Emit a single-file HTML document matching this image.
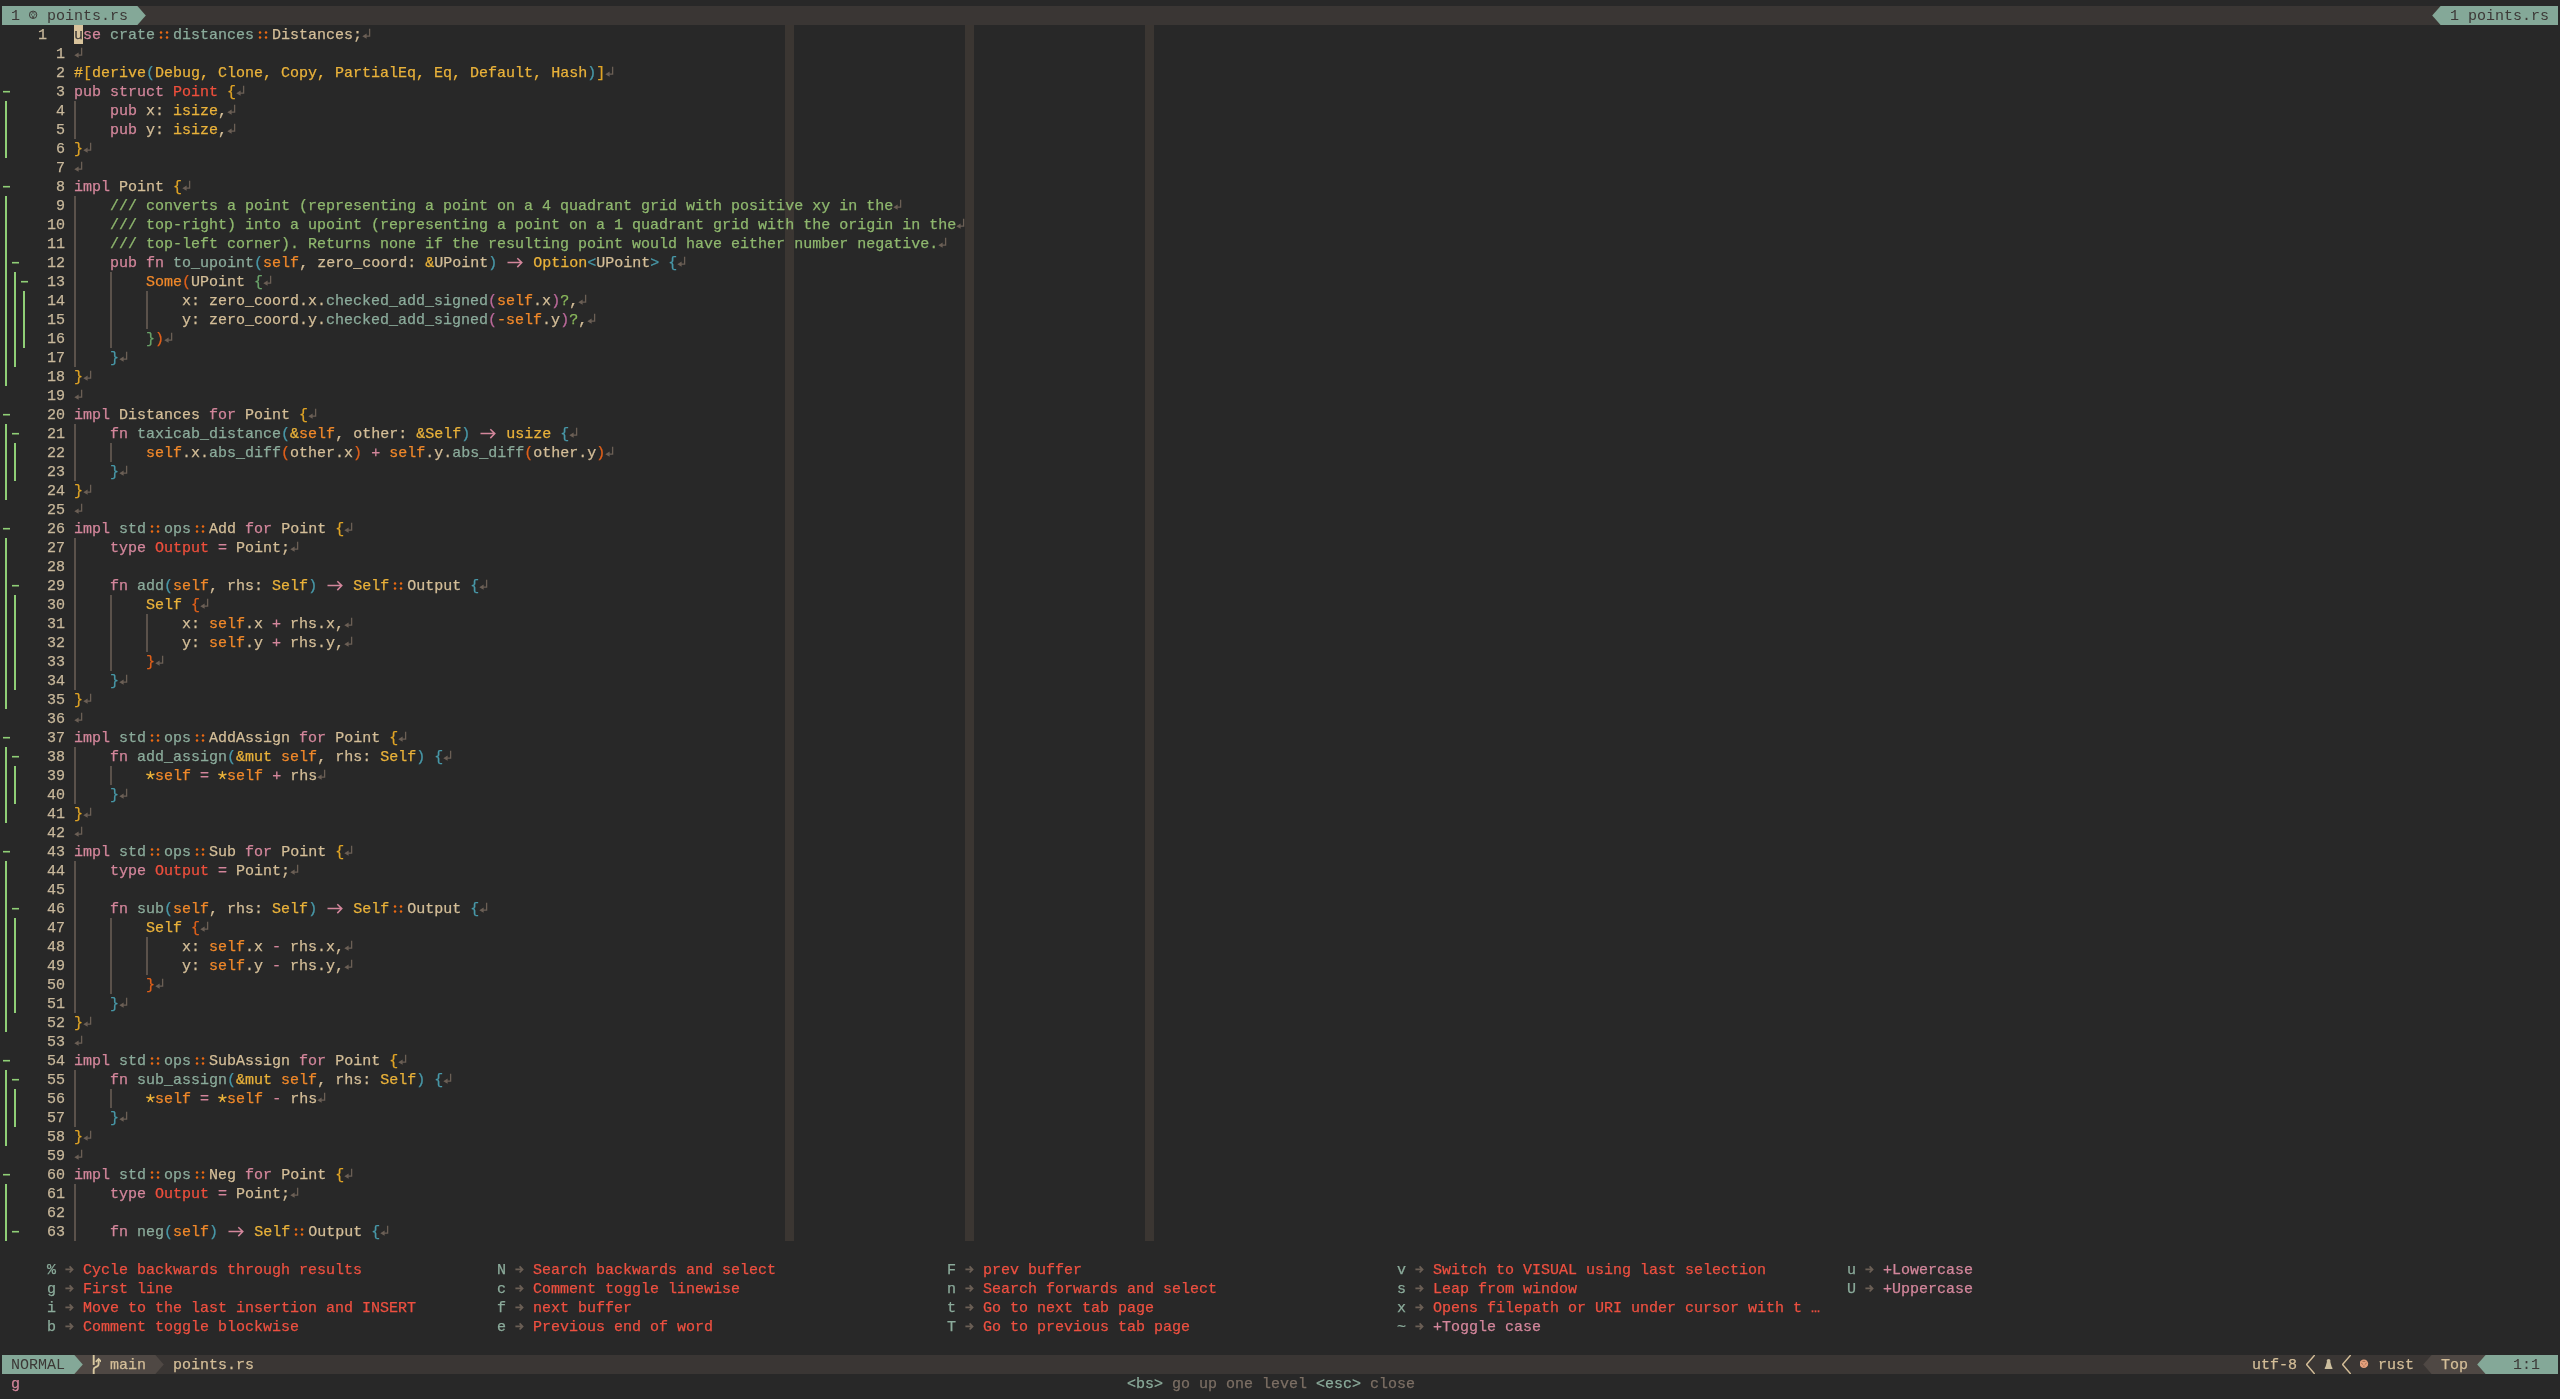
<!DOCTYPE html><html><head><meta charset="utf-8"><style>

html,body{margin:0;padding:0;background:#282828;width:2560px;height:1399px;overflow:hidden}
body{position:relative;font-family:"Liberation Mono",monospace;font-size:15px;color:#d4be98;-webkit-text-stroke-width:0.25px}
#w{position:absolute;left:0;top:0;width:2560px;height:1399px;will-change:transform}
.t{position:absolute;height:19px;line-height:19px;white-space:pre;padding-top:1px;box-sizing:border-box}
.bg{color:#282828}
.fg{color:#d4be98}
.k{color:#d3869b}
.n{color:#8bab9b}
.o{color:#f0882a}
.y{color:#eab23a}
.r{color:#ef4f3c}
.c{color:#8fb86e}
.q{color:#8ab85c}
.d{color:#ec6a12}
.p1{color:#e0a425}
.p2{color:#4898a8}
.p3{color:#e0601a}
.p4{color:#6aa46a}
.p5{color:#bb699a}
.nl{color:#6b5f55}
.lnr{color:#c8b89b}
.cc{color:#3b3632}

</style></head><body><div id="w">
<div style="position:absolute;left:785px;top:25px;width:9px;height:1216px;background:#3b3632;"></div>
<div style="position:absolute;left:965px;top:25px;width:9px;height:1216px;background:#3b3632;"></div>
<div style="position:absolute;left:1145px;top:25px;width:9px;height:1216px;background:#3b3632;"></div>
<div style="position:absolute;left:2px;top:6px;width:2556px;height:19px;background:#3a3634;"></div>
<div class="t" style="left:38px;top:25px;"><span class="lnr">1</span></div>
<div class="t" style="left:74px;top:25px;"><span class="k">use</span> <span class="n">crate</span><span class="d">  </span><span class="n">distances</span><span class="d">  </span>Distances;</div>
<svg style="position:absolute;left:362px;top:25px" width="9" height="19"><path d="M7.6 3.7V11.2H2.5" fill="none" stroke="#6b5f55" stroke-width="1.3"/><path d="M0.3 11.2L4.6 8.6V13.8Z" fill="#6b5f55"/></svg>
<div class="t" style="left:56px;top:44px;"><span class="lnr">1</span></div>
<svg style="position:absolute;left:74px;top:44px" width="9" height="19"><path d="M7.6 3.7V11.2H2.5" fill="none" stroke="#6b5f55" stroke-width="1.3"/><path d="M0.3 11.2L4.6 8.6V13.8Z" fill="#6b5f55"/></svg>
<div class="t" style="left:56px;top:63px;"><span class="lnr">2</span></div>
<div class="t" style="left:74px;top:63px;"><span class="y">#</span><span class="p1">[</span><span class="y">derive</span><span class="p2">(</span><span class="y">Debug, Clone, Copy, PartialEq, Eq, Default, Hash</span><span class="p2">)</span><span class="p1">]</span></div>
<svg style="position:absolute;left:605px;top:63px" width="9" height="19"><path d="M7.6 3.7V11.2H2.5" fill="none" stroke="#6b5f55" stroke-width="1.3"/><path d="M0.3 11.2L4.6 8.6V13.8Z" fill="#6b5f55"/></svg>
<svg style="position:absolute;left:2px;top:82px" width="9" height="19"><rect x="1" y="8.9" width="7" height="1.6" fill="#8fcf76"/></svg>
<div class="t" style="left:56px;top:82px;"><span class="lnr">3</span></div>
<div class="t" style="left:74px;top:82px;"><span class="k">pub</span> <span class="k">struct</span> <span class="r">Point</span> <span class="p1">{</span></div>
<svg style="position:absolute;left:236px;top:82px" width="9" height="19"><path d="M7.6 3.7V11.2H2.5" fill="none" stroke="#6b5f55" stroke-width="1.3"/><path d="M0.3 11.2L4.6 8.6V13.8Z" fill="#6b5f55"/></svg>
<div style="position:absolute;left:5px;top:101px;width:2px;height:19px;background:#8fcf76;"></div>
<div class="t" style="left:56px;top:101px;"><span class="lnr">4</span></div>
<div style="position:absolute;left:74px;top:101px;width:2px;height:19px;background:#5b524b;"></div>
<div class="t" style="left:74px;top:101px;">    <span class="k">pub</span> x: <span class="y">isize</span>,</div>
<svg style="position:absolute;left:227px;top:101px" width="9" height="19"><path d="M7.6 3.7V11.2H2.5" fill="none" stroke="#6b5f55" stroke-width="1.3"/><path d="M0.3 11.2L4.6 8.6V13.8Z" fill="#6b5f55"/></svg>
<div style="position:absolute;left:5px;top:120px;width:2px;height:19px;background:#8fcf76;"></div>
<div class="t" style="left:56px;top:120px;"><span class="lnr">5</span></div>
<div style="position:absolute;left:74px;top:120px;width:2px;height:19px;background:#5b524b;"></div>
<div class="t" style="left:74px;top:120px;">    <span class="k">pub</span> y: <span class="y">isize</span>,</div>
<svg style="position:absolute;left:227px;top:120px" width="9" height="19"><path d="M7.6 3.7V11.2H2.5" fill="none" stroke="#6b5f55" stroke-width="1.3"/><path d="M0.3 11.2L4.6 8.6V13.8Z" fill="#6b5f55"/></svg>
<div style="position:absolute;left:5px;top:139px;width:2px;height:19px;background:#8fcf76;"></div>
<div class="t" style="left:56px;top:139px;"><span class="lnr">6</span></div>
<div class="t" style="left:74px;top:139px;"><span class="p1">}</span></div>
<svg style="position:absolute;left:83px;top:139px" width="9" height="19"><path d="M7.6 3.7V11.2H2.5" fill="none" stroke="#6b5f55" stroke-width="1.3"/><path d="M0.3 11.2L4.6 8.6V13.8Z" fill="#6b5f55"/></svg>
<div class="t" style="left:56px;top:158px;"><span class="lnr">7</span></div>
<svg style="position:absolute;left:74px;top:158px" width="9" height="19"><path d="M7.6 3.7V11.2H2.5" fill="none" stroke="#6b5f55" stroke-width="1.3"/><path d="M0.3 11.2L4.6 8.6V13.8Z" fill="#6b5f55"/></svg>
<svg style="position:absolute;left:2px;top:177px" width="9" height="19"><rect x="1" y="8.9" width="7" height="1.6" fill="#8fcf76"/></svg>
<div class="t" style="left:56px;top:177px;"><span class="lnr">8</span></div>
<div class="t" style="left:74px;top:177px;"><span class="k">impl</span> Point <span class="p1">{</span></div>
<svg style="position:absolute;left:182px;top:177px" width="9" height="19"><path d="M7.6 3.7V11.2H2.5" fill="none" stroke="#6b5f55" stroke-width="1.3"/><path d="M0.3 11.2L4.6 8.6V13.8Z" fill="#6b5f55"/></svg>
<div style="position:absolute;left:5px;top:196px;width:2px;height:19px;background:#8fcf76;"></div>
<div class="t" style="left:56px;top:196px;"><span class="lnr">9</span></div>
<div style="position:absolute;left:74px;top:196px;width:2px;height:19px;background:#5b524b;"></div>
<div class="t" style="left:74px;top:196px;">    <span class="c">/// converts a point (representing a point on a 4 quadrant grid with positive xy in the</span></div>
<svg style="position:absolute;left:893px;top:196px" width="9" height="19"><path d="M7.6 3.7V11.2H2.5" fill="none" stroke="#6b5f55" stroke-width="1.3"/><path d="M0.3 11.2L4.6 8.6V13.8Z" fill="#6b5f55"/></svg>
<div style="position:absolute;left:5px;top:215px;width:2px;height:19px;background:#8fcf76;"></div>
<div class="t" style="left:47px;top:215px;"><span class="lnr">10</span></div>
<div style="position:absolute;left:74px;top:215px;width:2px;height:19px;background:#5b524b;"></div>
<div class="t" style="left:74px;top:215px;">    <span class="c">/// top-right) into a upoint (representing a point on a 1 quadrant grid with the origin in the</span></div>
<svg style="position:absolute;left:956px;top:215px" width="9" height="19"><path d="M7.6 3.7V11.2H2.5" fill="none" stroke="#6b5f55" stroke-width="1.3"/><path d="M0.3 11.2L4.6 8.6V13.8Z" fill="#6b5f55"/></svg>
<div style="position:absolute;left:5px;top:234px;width:2px;height:19px;background:#8fcf76;"></div>
<div class="t" style="left:47px;top:234px;"><span class="lnr">11</span></div>
<div style="position:absolute;left:74px;top:234px;width:2px;height:19px;background:#5b524b;"></div>
<div class="t" style="left:74px;top:234px;">    <span class="c">/// top-left corner). Returns none if the resulting point would have either number negative.</span></div>
<svg style="position:absolute;left:938px;top:234px" width="9" height="19"><path d="M7.6 3.7V11.2H2.5" fill="none" stroke="#6b5f55" stroke-width="1.3"/><path d="M0.3 11.2L4.6 8.6V13.8Z" fill="#6b5f55"/></svg>
<div style="position:absolute;left:5px;top:253px;width:2px;height:19px;background:#8fcf76;"></div>
<svg style="position:absolute;left:11px;top:253px" width="9" height="19"><rect x="1" y="8.9" width="7" height="1.6" fill="#8fcf76"/></svg>
<div class="t" style="left:47px;top:253px;"><span class="lnr">12</span></div>
<div style="position:absolute;left:74px;top:253px;width:2px;height:19px;background:#5b524b;"></div>
<div class="t" style="left:74px;top:253px;">    <span class="k">pub</span> <span class="k">fn</span> <span class="n">to_upoint</span><span class="p2">(</span><span class="o">self</span>, zero_coord: <span class="y">&amp;</span>UPoint<span class="p2">)</span> <span class="k">  </span> <span class="y">Option</span><span class="p2">&lt;</span>UPoint<span class="p2">&gt;</span> <span class="p2">{</span></div>
<svg style="position:absolute;left:677px;top:253px" width="9" height="19"><path d="M7.6 3.7V11.2H2.5" fill="none" stroke="#6b5f55" stroke-width="1.3"/><path d="M0.3 11.2L4.6 8.6V13.8Z" fill="#6b5f55"/></svg>
<div style="position:absolute;left:5px;top:272px;width:2px;height:19px;background:#8fcf76;"></div>
<div style="position:absolute;left:14px;top:272px;width:2px;height:19px;background:#8fcf76;"></div>
<svg style="position:absolute;left:20px;top:272px" width="9" height="19"><rect x="1" y="8.9" width="7" height="1.6" fill="#8fcf76"/></svg>
<div class="t" style="left:47px;top:272px;"><span class="lnr">13</span></div>
<div style="position:absolute;left:74px;top:272px;width:2px;height:19px;background:#5b524b;"></div>
<div style="position:absolute;left:110px;top:272px;width:2px;height:19px;background:#5b524b;"></div>
<div class="t" style="left:74px;top:272px;">        <span class="o">Some</span><span class="p3">(</span>UPoint <span class="p4">{</span></div>
<svg style="position:absolute;left:263px;top:272px" width="9" height="19"><path d="M7.6 3.7V11.2H2.5" fill="none" stroke="#6b5f55" stroke-width="1.3"/><path d="M0.3 11.2L4.6 8.6V13.8Z" fill="#6b5f55"/></svg>
<div style="position:absolute;left:5px;top:291px;width:2px;height:19px;background:#8fcf76;"></div>
<div style="position:absolute;left:14px;top:291px;width:2px;height:19px;background:#8fcf76;"></div>
<div style="position:absolute;left:23px;top:291px;width:2px;height:19px;background:#8fcf76;"></div>
<div class="t" style="left:47px;top:291px;"><span class="lnr">14</span></div>
<div style="position:absolute;left:74px;top:291px;width:2px;height:19px;background:#5b524b;"></div>
<div style="position:absolute;left:110px;top:291px;width:2px;height:19px;background:#5b524b;"></div>
<div style="position:absolute;left:146px;top:291px;width:2px;height:19px;background:#5b524b;"></div>
<div class="t" style="left:74px;top:291px;">            x: zero_coord.x.<span class="n">checked_add_signed</span><span class="p5">(</span><span class="o">self</span>.x<span class="p5">)</span><span class="q">?</span>,</div>
<svg style="position:absolute;left:578px;top:291px" width="9" height="19"><path d="M7.6 3.7V11.2H2.5" fill="none" stroke="#6b5f55" stroke-width="1.3"/><path d="M0.3 11.2L4.6 8.6V13.8Z" fill="#6b5f55"/></svg>
<div style="position:absolute;left:5px;top:310px;width:2px;height:19px;background:#8fcf76;"></div>
<div style="position:absolute;left:14px;top:310px;width:2px;height:19px;background:#8fcf76;"></div>
<div style="position:absolute;left:23px;top:310px;width:2px;height:19px;background:#8fcf76;"></div>
<div class="t" style="left:47px;top:310px;"><span class="lnr">15</span></div>
<div style="position:absolute;left:74px;top:310px;width:2px;height:19px;background:#5b524b;"></div>
<div style="position:absolute;left:110px;top:310px;width:2px;height:19px;background:#5b524b;"></div>
<div style="position:absolute;left:146px;top:310px;width:2px;height:19px;background:#5b524b;"></div>
<div class="t" style="left:74px;top:310px;">            y: zero_coord.y.<span class="n">checked_add_signed</span><span class="p5">(</span><span class="o">-self</span>.y<span class="p5">)</span><span class="q">?</span>,</div>
<svg style="position:absolute;left:587px;top:310px" width="9" height="19"><path d="M7.6 3.7V11.2H2.5" fill="none" stroke="#6b5f55" stroke-width="1.3"/><path d="M0.3 11.2L4.6 8.6V13.8Z" fill="#6b5f55"/></svg>
<div style="position:absolute;left:5px;top:329px;width:2px;height:19px;background:#8fcf76;"></div>
<div style="position:absolute;left:14px;top:329px;width:2px;height:19px;background:#8fcf76;"></div>
<div style="position:absolute;left:23px;top:329px;width:2px;height:19px;background:#8fcf76;"></div>
<div class="t" style="left:47px;top:329px;"><span class="lnr">16</span></div>
<div style="position:absolute;left:74px;top:329px;width:2px;height:19px;background:#5b524b;"></div>
<div style="position:absolute;left:110px;top:329px;width:2px;height:19px;background:#5b524b;"></div>
<div class="t" style="left:74px;top:329px;">        <span class="p4">}</span><span class="p3">)</span></div>
<svg style="position:absolute;left:164px;top:329px" width="9" height="19"><path d="M7.6 3.7V11.2H2.5" fill="none" stroke="#6b5f55" stroke-width="1.3"/><path d="M0.3 11.2L4.6 8.6V13.8Z" fill="#6b5f55"/></svg>
<div style="position:absolute;left:5px;top:348px;width:2px;height:19px;background:#8fcf76;"></div>
<div style="position:absolute;left:14px;top:348px;width:2px;height:19px;background:#8fcf76;"></div>
<div class="t" style="left:47px;top:348px;"><span class="lnr">17</span></div>
<div style="position:absolute;left:74px;top:348px;width:2px;height:19px;background:#5b524b;"></div>
<div class="t" style="left:74px;top:348px;">    <span class="p2">}</span></div>
<svg style="position:absolute;left:119px;top:348px" width="9" height="19"><path d="M7.6 3.7V11.2H2.5" fill="none" stroke="#6b5f55" stroke-width="1.3"/><path d="M0.3 11.2L4.6 8.6V13.8Z" fill="#6b5f55"/></svg>
<div style="position:absolute;left:5px;top:367px;width:2px;height:19px;background:#8fcf76;"></div>
<div class="t" style="left:47px;top:367px;"><span class="lnr">18</span></div>
<div class="t" style="left:74px;top:367px;"><span class="p1">}</span></div>
<svg style="position:absolute;left:83px;top:367px" width="9" height="19"><path d="M7.6 3.7V11.2H2.5" fill="none" stroke="#6b5f55" stroke-width="1.3"/><path d="M0.3 11.2L4.6 8.6V13.8Z" fill="#6b5f55"/></svg>
<div class="t" style="left:47px;top:386px;"><span class="lnr">19</span></div>
<svg style="position:absolute;left:74px;top:386px" width="9" height="19"><path d="M7.6 3.7V11.2H2.5" fill="none" stroke="#6b5f55" stroke-width="1.3"/><path d="M0.3 11.2L4.6 8.6V13.8Z" fill="#6b5f55"/></svg>
<svg style="position:absolute;left:2px;top:405px" width="9" height="19"><rect x="1" y="8.9" width="7" height="1.6" fill="#8fcf76"/></svg>
<div class="t" style="left:47px;top:405px;"><span class="lnr">20</span></div>
<div class="t" style="left:74px;top:405px;"><span class="k">impl</span> Distances <span class="k">for</span> Point <span class="p1">{</span></div>
<svg style="position:absolute;left:308px;top:405px" width="9" height="19"><path d="M7.6 3.7V11.2H2.5" fill="none" stroke="#6b5f55" stroke-width="1.3"/><path d="M0.3 11.2L4.6 8.6V13.8Z" fill="#6b5f55"/></svg>
<div style="position:absolute;left:5px;top:424px;width:2px;height:19px;background:#8fcf76;"></div>
<svg style="position:absolute;left:11px;top:424px" width="9" height="19"><rect x="1" y="8.9" width="7" height="1.6" fill="#8fcf76"/></svg>
<div class="t" style="left:47px;top:424px;"><span class="lnr">21</span></div>
<div style="position:absolute;left:74px;top:424px;width:2px;height:19px;background:#5b524b;"></div>
<div class="t" style="left:74px;top:424px;">    <span class="k">fn</span> <span class="n">taxicab_distance</span><span class="p2">(</span><span class="y">&amp;</span><span class="o">self</span>, other: <span class="y">&amp;Self</span><span class="p2">)</span> <span class="k">  </span> <span class="y">usize</span> <span class="p2">{</span></div>
<svg style="position:absolute;left:569px;top:424px" width="9" height="19"><path d="M7.6 3.7V11.2H2.5" fill="none" stroke="#6b5f55" stroke-width="1.3"/><path d="M0.3 11.2L4.6 8.6V13.8Z" fill="#6b5f55"/></svg>
<div style="position:absolute;left:5px;top:443px;width:2px;height:19px;background:#8fcf76;"></div>
<div style="position:absolute;left:14px;top:443px;width:2px;height:19px;background:#8fcf76;"></div>
<div class="t" style="left:47px;top:443px;"><span class="lnr">22</span></div>
<div style="position:absolute;left:74px;top:443px;width:2px;height:19px;background:#5b524b;"></div>
<div style="position:absolute;left:110px;top:443px;width:2px;height:19px;background:#5b524b;"></div>
<div class="t" style="left:74px;top:443px;">        <span class="o">self</span>.x.<span class="n">abs_diff</span><span class="p3">(</span>other.x<span class="p3">)</span> <span class="k">+</span> <span class="o">self</span>.y.<span class="n">abs_diff</span><span class="p3">(</span>other.y<span class="p3">)</span></div>
<svg style="position:absolute;left:605px;top:443px" width="9" height="19"><path d="M7.6 3.7V11.2H2.5" fill="none" stroke="#6b5f55" stroke-width="1.3"/><path d="M0.3 11.2L4.6 8.6V13.8Z" fill="#6b5f55"/></svg>
<div style="position:absolute;left:5px;top:462px;width:2px;height:19px;background:#8fcf76;"></div>
<div style="position:absolute;left:14px;top:462px;width:2px;height:19px;background:#8fcf76;"></div>
<div class="t" style="left:47px;top:462px;"><span class="lnr">23</span></div>
<div style="position:absolute;left:74px;top:462px;width:2px;height:19px;background:#5b524b;"></div>
<div class="t" style="left:74px;top:462px;">    <span class="p2">}</span></div>
<svg style="position:absolute;left:119px;top:462px" width="9" height="19"><path d="M7.6 3.7V11.2H2.5" fill="none" stroke="#6b5f55" stroke-width="1.3"/><path d="M0.3 11.2L4.6 8.6V13.8Z" fill="#6b5f55"/></svg>
<div style="position:absolute;left:5px;top:481px;width:2px;height:19px;background:#8fcf76;"></div>
<div class="t" style="left:47px;top:481px;"><span class="lnr">24</span></div>
<div class="t" style="left:74px;top:481px;"><span class="p1">}</span></div>
<svg style="position:absolute;left:83px;top:481px" width="9" height="19"><path d="M7.6 3.7V11.2H2.5" fill="none" stroke="#6b5f55" stroke-width="1.3"/><path d="M0.3 11.2L4.6 8.6V13.8Z" fill="#6b5f55"/></svg>
<div class="t" style="left:47px;top:500px;"><span class="lnr">25</span></div>
<svg style="position:absolute;left:74px;top:500px" width="9" height="19"><path d="M7.6 3.7V11.2H2.5" fill="none" stroke="#6b5f55" stroke-width="1.3"/><path d="M0.3 11.2L4.6 8.6V13.8Z" fill="#6b5f55"/></svg>
<svg style="position:absolute;left:2px;top:519px" width="9" height="19"><rect x="1" y="8.9" width="7" height="1.6" fill="#8fcf76"/></svg>
<div class="t" style="left:47px;top:519px;"><span class="lnr">26</span></div>
<div class="t" style="left:74px;top:519px;"><span class="k">impl</span> <span class="n">std</span><span class="d">  </span><span class="n">ops</span><span class="d">  </span>Add <span class="k">for</span> Point <span class="p1">{</span></div>
<svg style="position:absolute;left:344px;top:519px" width="9" height="19"><path d="M7.6 3.7V11.2H2.5" fill="none" stroke="#6b5f55" stroke-width="1.3"/><path d="M0.3 11.2L4.6 8.6V13.8Z" fill="#6b5f55"/></svg>
<div style="position:absolute;left:5px;top:538px;width:2px;height:19px;background:#8fcf76;"></div>
<div class="t" style="left:47px;top:538px;"><span class="lnr">27</span></div>
<div style="position:absolute;left:74px;top:538px;width:2px;height:19px;background:#5b524b;"></div>
<div class="t" style="left:74px;top:538px;">    <span class="k">type</span> <span class="r">Output</span> <span class="k">=</span> Point;</div>
<svg style="position:absolute;left:290px;top:538px" width="9" height="19"><path d="M7.6 3.7V11.2H2.5" fill="none" stroke="#6b5f55" stroke-width="1.3"/><path d="M0.3 11.2L4.6 8.6V13.8Z" fill="#6b5f55"/></svg>
<div style="position:absolute;left:5px;top:557px;width:2px;height:19px;background:#8fcf76;"></div>
<div class="t" style="left:47px;top:557px;"><span class="lnr">28</span></div>
<div style="position:absolute;left:74px;top:557px;width:2px;height:19px;background:#5b524b;"></div>
<div style="position:absolute;left:5px;top:576px;width:2px;height:19px;background:#8fcf76;"></div>
<svg style="position:absolute;left:11px;top:576px" width="9" height="19"><rect x="1" y="8.9" width="7" height="1.6" fill="#8fcf76"/></svg>
<div class="t" style="left:47px;top:576px;"><span class="lnr">29</span></div>
<div style="position:absolute;left:74px;top:576px;width:2px;height:19px;background:#5b524b;"></div>
<div class="t" style="left:74px;top:576px;">    <span class="k">fn</span> <span class="n">add</span><span class="p2">(</span><span class="o">self</span>, rhs: <span class="y">Self</span><span class="p2">)</span> <span class="k">  </span> <span class="y">Self</span><span class="d">  </span>Output <span class="p2">{</span></div>
<svg style="position:absolute;left:479px;top:576px" width="9" height="19"><path d="M7.6 3.7V11.2H2.5" fill="none" stroke="#6b5f55" stroke-width="1.3"/><path d="M0.3 11.2L4.6 8.6V13.8Z" fill="#6b5f55"/></svg>
<div style="position:absolute;left:5px;top:595px;width:2px;height:19px;background:#8fcf76;"></div>
<div style="position:absolute;left:14px;top:595px;width:2px;height:19px;background:#8fcf76;"></div>
<div class="t" style="left:47px;top:595px;"><span class="lnr">30</span></div>
<div style="position:absolute;left:74px;top:595px;width:2px;height:19px;background:#5b524b;"></div>
<div style="position:absolute;left:110px;top:595px;width:2px;height:19px;background:#5b524b;"></div>
<div class="t" style="left:74px;top:595px;">        <span class="y">Self</span> <span class="p3">{</span></div>
<svg style="position:absolute;left:200px;top:595px" width="9" height="19"><path d="M7.6 3.7V11.2H2.5" fill="none" stroke="#6b5f55" stroke-width="1.3"/><path d="M0.3 11.2L4.6 8.6V13.8Z" fill="#6b5f55"/></svg>
<div style="position:absolute;left:5px;top:614px;width:2px;height:19px;background:#8fcf76;"></div>
<div style="position:absolute;left:14px;top:614px;width:2px;height:19px;background:#8fcf76;"></div>
<div class="t" style="left:47px;top:614px;"><span class="lnr">31</span></div>
<div style="position:absolute;left:74px;top:614px;width:2px;height:19px;background:#5b524b;"></div>
<div style="position:absolute;left:110px;top:614px;width:2px;height:19px;background:#5b524b;"></div>
<div style="position:absolute;left:146px;top:614px;width:2px;height:19px;background:#5b524b;"></div>
<div class="t" style="left:74px;top:614px;">            x: <span class="o">self</span>.x <span class="k">+</span> rhs.x,</div>
<svg style="position:absolute;left:344px;top:614px" width="9" height="19"><path d="M7.6 3.7V11.2H2.5" fill="none" stroke="#6b5f55" stroke-width="1.3"/><path d="M0.3 11.2L4.6 8.6V13.8Z" fill="#6b5f55"/></svg>
<div style="position:absolute;left:5px;top:633px;width:2px;height:19px;background:#8fcf76;"></div>
<div style="position:absolute;left:14px;top:633px;width:2px;height:19px;background:#8fcf76;"></div>
<div class="t" style="left:47px;top:633px;"><span class="lnr">32</span></div>
<div style="position:absolute;left:74px;top:633px;width:2px;height:19px;background:#5b524b;"></div>
<div style="position:absolute;left:110px;top:633px;width:2px;height:19px;background:#5b524b;"></div>
<div style="position:absolute;left:146px;top:633px;width:2px;height:19px;background:#5b524b;"></div>
<div class="t" style="left:74px;top:633px;">            y: <span class="o">self</span>.y <span class="k">+</span> rhs.y,</div>
<svg style="position:absolute;left:344px;top:633px" width="9" height="19"><path d="M7.6 3.7V11.2H2.5" fill="none" stroke="#6b5f55" stroke-width="1.3"/><path d="M0.3 11.2L4.6 8.6V13.8Z" fill="#6b5f55"/></svg>
<div style="position:absolute;left:5px;top:652px;width:2px;height:19px;background:#8fcf76;"></div>
<div style="position:absolute;left:14px;top:652px;width:2px;height:19px;background:#8fcf76;"></div>
<div class="t" style="left:47px;top:652px;"><span class="lnr">33</span></div>
<div style="position:absolute;left:74px;top:652px;width:2px;height:19px;background:#5b524b;"></div>
<div style="position:absolute;left:110px;top:652px;width:2px;height:19px;background:#5b524b;"></div>
<div class="t" style="left:74px;top:652px;">        <span class="p3">}</span></div>
<svg style="position:absolute;left:155px;top:652px" width="9" height="19"><path d="M7.6 3.7V11.2H2.5" fill="none" stroke="#6b5f55" stroke-width="1.3"/><path d="M0.3 11.2L4.6 8.6V13.8Z" fill="#6b5f55"/></svg>
<div style="position:absolute;left:5px;top:671px;width:2px;height:19px;background:#8fcf76;"></div>
<div style="position:absolute;left:14px;top:671px;width:2px;height:19px;background:#8fcf76;"></div>
<div class="t" style="left:47px;top:671px;"><span class="lnr">34</span></div>
<div style="position:absolute;left:74px;top:671px;width:2px;height:19px;background:#5b524b;"></div>
<div class="t" style="left:74px;top:671px;">    <span class="p2">}</span></div>
<svg style="position:absolute;left:119px;top:671px" width="9" height="19"><path d="M7.6 3.7V11.2H2.5" fill="none" stroke="#6b5f55" stroke-width="1.3"/><path d="M0.3 11.2L4.6 8.6V13.8Z" fill="#6b5f55"/></svg>
<div style="position:absolute;left:5px;top:690px;width:2px;height:19px;background:#8fcf76;"></div>
<div class="t" style="left:47px;top:690px;"><span class="lnr">35</span></div>
<div class="t" style="left:74px;top:690px;"><span class="p1">}</span></div>
<svg style="position:absolute;left:83px;top:690px" width="9" height="19"><path d="M7.6 3.7V11.2H2.5" fill="none" stroke="#6b5f55" stroke-width="1.3"/><path d="M0.3 11.2L4.6 8.6V13.8Z" fill="#6b5f55"/></svg>
<div class="t" style="left:47px;top:709px;"><span class="lnr">36</span></div>
<svg style="position:absolute;left:74px;top:709px" width="9" height="19"><path d="M7.6 3.7V11.2H2.5" fill="none" stroke="#6b5f55" stroke-width="1.3"/><path d="M0.3 11.2L4.6 8.6V13.8Z" fill="#6b5f55"/></svg>
<svg style="position:absolute;left:2px;top:728px" width="9" height="19"><rect x="1" y="8.9" width="7" height="1.6" fill="#8fcf76"/></svg>
<div class="t" style="left:47px;top:728px;"><span class="lnr">37</span></div>
<div class="t" style="left:74px;top:728px;"><span class="k">impl</span> <span class="n">std</span><span class="d">  </span><span class="n">ops</span><span class="d">  </span>AddAssign <span class="k">for</span> Point <span class="p1">{</span></div>
<svg style="position:absolute;left:398px;top:728px" width="9" height="19"><path d="M7.6 3.7V11.2H2.5" fill="none" stroke="#6b5f55" stroke-width="1.3"/><path d="M0.3 11.2L4.6 8.6V13.8Z" fill="#6b5f55"/></svg>
<div style="position:absolute;left:5px;top:747px;width:2px;height:19px;background:#8fcf76;"></div>
<svg style="position:absolute;left:11px;top:747px" width="9" height="19"><rect x="1" y="8.9" width="7" height="1.6" fill="#8fcf76"/></svg>
<div class="t" style="left:47px;top:747px;"><span class="lnr">38</span></div>
<div style="position:absolute;left:74px;top:747px;width:2px;height:19px;background:#5b524b;"></div>
<div class="t" style="left:74px;top:747px;">    <span class="k">fn</span> <span class="n">add_assign</span><span class="p2">(</span><span class="y">&amp;mut</span> <span class="o">self</span>, rhs: <span class="y">Self</span><span class="p2">)</span> <span class="p2">{</span></div>
<svg style="position:absolute;left:443px;top:747px" width="9" height="19"><path d="M7.6 3.7V11.2H2.5" fill="none" stroke="#6b5f55" stroke-width="1.3"/><path d="M0.3 11.2L4.6 8.6V13.8Z" fill="#6b5f55"/></svg>
<div style="position:absolute;left:5px;top:766px;width:2px;height:19px;background:#8fcf76;"></div>
<div style="position:absolute;left:14px;top:766px;width:2px;height:19px;background:#8fcf76;"></div>
<div class="t" style="left:47px;top:766px;"><span class="lnr">39</span></div>
<div style="position:absolute;left:74px;top:766px;width:2px;height:19px;background:#5b524b;"></div>
<div style="position:absolute;left:110px;top:766px;width:2px;height:19px;background:#5b524b;"></div>
<div class="t" style="left:74px;top:766px;">        <span class="y"> </span><span class="o">self</span> <span class="k">=</span> <span class="y"> </span><span class="o">self</span> <span class="k">+</span> rhs</div>
<svg style="position:absolute;left:317px;top:766px" width="9" height="19"><path d="M7.6 3.7V11.2H2.5" fill="none" stroke="#6b5f55" stroke-width="1.3"/><path d="M0.3 11.2L4.6 8.6V13.8Z" fill="#6b5f55"/></svg>
<div style="position:absolute;left:5px;top:785px;width:2px;height:19px;background:#8fcf76;"></div>
<div style="position:absolute;left:14px;top:785px;width:2px;height:19px;background:#8fcf76;"></div>
<div class="t" style="left:47px;top:785px;"><span class="lnr">40</span></div>
<div style="position:absolute;left:74px;top:785px;width:2px;height:19px;background:#5b524b;"></div>
<div class="t" style="left:74px;top:785px;">    <span class="p2">}</span></div>
<svg style="position:absolute;left:119px;top:785px" width="9" height="19"><path d="M7.6 3.7V11.2H2.5" fill="none" stroke="#6b5f55" stroke-width="1.3"/><path d="M0.3 11.2L4.6 8.6V13.8Z" fill="#6b5f55"/></svg>
<div style="position:absolute;left:5px;top:804px;width:2px;height:19px;background:#8fcf76;"></div>
<div class="t" style="left:47px;top:804px;"><span class="lnr">41</span></div>
<div class="t" style="left:74px;top:804px;"><span class="p1">}</span></div>
<svg style="position:absolute;left:83px;top:804px" width="9" height="19"><path d="M7.6 3.7V11.2H2.5" fill="none" stroke="#6b5f55" stroke-width="1.3"/><path d="M0.3 11.2L4.6 8.6V13.8Z" fill="#6b5f55"/></svg>
<div class="t" style="left:47px;top:823px;"><span class="lnr">42</span></div>
<svg style="position:absolute;left:74px;top:823px" width="9" height="19"><path d="M7.6 3.7V11.2H2.5" fill="none" stroke="#6b5f55" stroke-width="1.3"/><path d="M0.3 11.2L4.6 8.6V13.8Z" fill="#6b5f55"/></svg>
<svg style="position:absolute;left:2px;top:842px" width="9" height="19"><rect x="1" y="8.9" width="7" height="1.6" fill="#8fcf76"/></svg>
<div class="t" style="left:47px;top:842px;"><span class="lnr">43</span></div>
<div class="t" style="left:74px;top:842px;"><span class="k">impl</span> <span class="n">std</span><span class="d">  </span><span class="n">ops</span><span class="d">  </span>Sub <span class="k">for</span> Point <span class="p1">{</span></div>
<svg style="position:absolute;left:344px;top:842px" width="9" height="19"><path d="M7.6 3.7V11.2H2.5" fill="none" stroke="#6b5f55" stroke-width="1.3"/><path d="M0.3 11.2L4.6 8.6V13.8Z" fill="#6b5f55"/></svg>
<div style="position:absolute;left:5px;top:861px;width:2px;height:19px;background:#8fcf76;"></div>
<div class="t" style="left:47px;top:861px;"><span class="lnr">44</span></div>
<div style="position:absolute;left:74px;top:861px;width:2px;height:19px;background:#5b524b;"></div>
<div class="t" style="left:74px;top:861px;">    <span class="k">type</span> <span class="r">Output</span> <span class="k">=</span> Point;</div>
<svg style="position:absolute;left:290px;top:861px" width="9" height="19"><path d="M7.6 3.7V11.2H2.5" fill="none" stroke="#6b5f55" stroke-width="1.3"/><path d="M0.3 11.2L4.6 8.6V13.8Z" fill="#6b5f55"/></svg>
<div style="position:absolute;left:5px;top:880px;width:2px;height:19px;background:#8fcf76;"></div>
<div class="t" style="left:47px;top:880px;"><span class="lnr">45</span></div>
<div style="position:absolute;left:74px;top:880px;width:2px;height:19px;background:#5b524b;"></div>
<div style="position:absolute;left:5px;top:899px;width:2px;height:19px;background:#8fcf76;"></div>
<svg style="position:absolute;left:11px;top:899px" width="9" height="19"><rect x="1" y="8.9" width="7" height="1.6" fill="#8fcf76"/></svg>
<div class="t" style="left:47px;top:899px;"><span class="lnr">46</span></div>
<div style="position:absolute;left:74px;top:899px;width:2px;height:19px;background:#5b524b;"></div>
<div class="t" style="left:74px;top:899px;">    <span class="k">fn</span> <span class="n">sub</span><span class="p2">(</span><span class="o">self</span>, rhs: <span class="y">Self</span><span class="p2">)</span> <span class="k">  </span> <span class="y">Self</span><span class="d">  </span>Output <span class="p2">{</span></div>
<svg style="position:absolute;left:479px;top:899px" width="9" height="19"><path d="M7.6 3.7V11.2H2.5" fill="none" stroke="#6b5f55" stroke-width="1.3"/><path d="M0.3 11.2L4.6 8.6V13.8Z" fill="#6b5f55"/></svg>
<div style="position:absolute;left:5px;top:918px;width:2px;height:19px;background:#8fcf76;"></div>
<div style="position:absolute;left:14px;top:918px;width:2px;height:19px;background:#8fcf76;"></div>
<div class="t" style="left:47px;top:918px;"><span class="lnr">47</span></div>
<div style="position:absolute;left:74px;top:918px;width:2px;height:19px;background:#5b524b;"></div>
<div style="position:absolute;left:110px;top:918px;width:2px;height:19px;background:#5b524b;"></div>
<div class="t" style="left:74px;top:918px;">        <span class="y">Self</span> <span class="p3">{</span></div>
<svg style="position:absolute;left:200px;top:918px" width="9" height="19"><path d="M7.6 3.7V11.2H2.5" fill="none" stroke="#6b5f55" stroke-width="1.3"/><path d="M0.3 11.2L4.6 8.6V13.8Z" fill="#6b5f55"/></svg>
<div style="position:absolute;left:5px;top:937px;width:2px;height:19px;background:#8fcf76;"></div>
<div style="position:absolute;left:14px;top:937px;width:2px;height:19px;background:#8fcf76;"></div>
<div class="t" style="left:47px;top:937px;"><span class="lnr">48</span></div>
<div style="position:absolute;left:74px;top:937px;width:2px;height:19px;background:#5b524b;"></div>
<div style="position:absolute;left:110px;top:937px;width:2px;height:19px;background:#5b524b;"></div>
<div style="position:absolute;left:146px;top:937px;width:2px;height:19px;background:#5b524b;"></div>
<div class="t" style="left:74px;top:937px;">            x: <span class="o">self</span>.x <span class="k">-</span> rhs.x,</div>
<svg style="position:absolute;left:344px;top:937px" width="9" height="19"><path d="M7.6 3.7V11.2H2.5" fill="none" stroke="#6b5f55" stroke-width="1.3"/><path d="M0.3 11.2L4.6 8.6V13.8Z" fill="#6b5f55"/></svg>
<div style="position:absolute;left:5px;top:956px;width:2px;height:19px;background:#8fcf76;"></div>
<div style="position:absolute;left:14px;top:956px;width:2px;height:19px;background:#8fcf76;"></div>
<div class="t" style="left:47px;top:956px;"><span class="lnr">49</span></div>
<div style="position:absolute;left:74px;top:956px;width:2px;height:19px;background:#5b524b;"></div>
<div style="position:absolute;left:110px;top:956px;width:2px;height:19px;background:#5b524b;"></div>
<div style="position:absolute;left:146px;top:956px;width:2px;height:19px;background:#5b524b;"></div>
<div class="t" style="left:74px;top:956px;">            y: <span class="o">self</span>.y <span class="k">-</span> rhs.y,</div>
<svg style="position:absolute;left:344px;top:956px" width="9" height="19"><path d="M7.6 3.7V11.2H2.5" fill="none" stroke="#6b5f55" stroke-width="1.3"/><path d="M0.3 11.2L4.6 8.6V13.8Z" fill="#6b5f55"/></svg>
<div style="position:absolute;left:5px;top:975px;width:2px;height:19px;background:#8fcf76;"></div>
<div style="position:absolute;left:14px;top:975px;width:2px;height:19px;background:#8fcf76;"></div>
<div class="t" style="left:47px;top:975px;"><span class="lnr">50</span></div>
<div style="position:absolute;left:74px;top:975px;width:2px;height:19px;background:#5b524b;"></div>
<div style="position:absolute;left:110px;top:975px;width:2px;height:19px;background:#5b524b;"></div>
<div class="t" style="left:74px;top:975px;">        <span class="p3">}</span></div>
<svg style="position:absolute;left:155px;top:975px" width="9" height="19"><path d="M7.6 3.7V11.2H2.5" fill="none" stroke="#6b5f55" stroke-width="1.3"/><path d="M0.3 11.2L4.6 8.6V13.8Z" fill="#6b5f55"/></svg>
<div style="position:absolute;left:5px;top:994px;width:2px;height:19px;background:#8fcf76;"></div>
<div style="position:absolute;left:14px;top:994px;width:2px;height:19px;background:#8fcf76;"></div>
<div class="t" style="left:47px;top:994px;"><span class="lnr">51</span></div>
<div style="position:absolute;left:74px;top:994px;width:2px;height:19px;background:#5b524b;"></div>
<div class="t" style="left:74px;top:994px;">    <span class="p2">}</span></div>
<svg style="position:absolute;left:119px;top:994px" width="9" height="19"><path d="M7.6 3.7V11.2H2.5" fill="none" stroke="#6b5f55" stroke-width="1.3"/><path d="M0.3 11.2L4.6 8.6V13.8Z" fill="#6b5f55"/></svg>
<div style="position:absolute;left:5px;top:1013px;width:2px;height:19px;background:#8fcf76;"></div>
<div class="t" style="left:47px;top:1013px;"><span class="lnr">52</span></div>
<div class="t" style="left:74px;top:1013px;"><span class="p1">}</span></div>
<svg style="position:absolute;left:83px;top:1013px" width="9" height="19"><path d="M7.6 3.7V11.2H2.5" fill="none" stroke="#6b5f55" stroke-width="1.3"/><path d="M0.3 11.2L4.6 8.6V13.8Z" fill="#6b5f55"/></svg>
<div class="t" style="left:47px;top:1032px;"><span class="lnr">53</span></div>
<svg style="position:absolute;left:74px;top:1032px" width="9" height="19"><path d="M7.6 3.7V11.2H2.5" fill="none" stroke="#6b5f55" stroke-width="1.3"/><path d="M0.3 11.2L4.6 8.6V13.8Z" fill="#6b5f55"/></svg>
<svg style="position:absolute;left:2px;top:1051px" width="9" height="19"><rect x="1" y="8.9" width="7" height="1.6" fill="#8fcf76"/></svg>
<div class="t" style="left:47px;top:1051px;"><span class="lnr">54</span></div>
<div class="t" style="left:74px;top:1051px;"><span class="k">impl</span> <span class="n">std</span><span class="d">  </span><span class="n">ops</span><span class="d">  </span>SubAssign <span class="k">for</span> Point <span class="p1">{</span></div>
<svg style="position:absolute;left:398px;top:1051px" width="9" height="19"><path d="M7.6 3.7V11.2H2.5" fill="none" stroke="#6b5f55" stroke-width="1.3"/><path d="M0.3 11.2L4.6 8.6V13.8Z" fill="#6b5f55"/></svg>
<div style="position:absolute;left:5px;top:1070px;width:2px;height:19px;background:#8fcf76;"></div>
<svg style="position:absolute;left:11px;top:1070px" width="9" height="19"><rect x="1" y="8.9" width="7" height="1.6" fill="#8fcf76"/></svg>
<div class="t" style="left:47px;top:1070px;"><span class="lnr">55</span></div>
<div style="position:absolute;left:74px;top:1070px;width:2px;height:19px;background:#5b524b;"></div>
<div class="t" style="left:74px;top:1070px;">    <span class="k">fn</span> <span class="n">sub_assign</span><span class="p2">(</span><span class="y">&amp;mut</span> <span class="o">self</span>, rhs: <span class="y">Self</span><span class="p2">)</span> <span class="p2">{</span></div>
<svg style="position:absolute;left:443px;top:1070px" width="9" height="19"><path d="M7.6 3.7V11.2H2.5" fill="none" stroke="#6b5f55" stroke-width="1.3"/><path d="M0.3 11.2L4.6 8.6V13.8Z" fill="#6b5f55"/></svg>
<div style="position:absolute;left:5px;top:1089px;width:2px;height:19px;background:#8fcf76;"></div>
<div style="position:absolute;left:14px;top:1089px;width:2px;height:19px;background:#8fcf76;"></div>
<div class="t" style="left:47px;top:1089px;"><span class="lnr">56</span></div>
<div style="position:absolute;left:74px;top:1089px;width:2px;height:19px;background:#5b524b;"></div>
<div style="position:absolute;left:110px;top:1089px;width:2px;height:19px;background:#5b524b;"></div>
<div class="t" style="left:74px;top:1089px;">        <span class="y"> </span><span class="o">self</span> <span class="k">=</span> <span class="y"> </span><span class="o">self</span> <span class="k">-</span> rhs</div>
<svg style="position:absolute;left:317px;top:1089px" width="9" height="19"><path d="M7.6 3.7V11.2H2.5" fill="none" stroke="#6b5f55" stroke-width="1.3"/><path d="M0.3 11.2L4.6 8.6V13.8Z" fill="#6b5f55"/></svg>
<div style="position:absolute;left:5px;top:1108px;width:2px;height:19px;background:#8fcf76;"></div>
<div style="position:absolute;left:14px;top:1108px;width:2px;height:19px;background:#8fcf76;"></div>
<div class="t" style="left:47px;top:1108px;"><span class="lnr">57</span></div>
<div style="position:absolute;left:74px;top:1108px;width:2px;height:19px;background:#5b524b;"></div>
<div class="t" style="left:74px;top:1108px;">    <span class="p2">}</span></div>
<svg style="position:absolute;left:119px;top:1108px" width="9" height="19"><path d="M7.6 3.7V11.2H2.5" fill="none" stroke="#6b5f55" stroke-width="1.3"/><path d="M0.3 11.2L4.6 8.6V13.8Z" fill="#6b5f55"/></svg>
<div style="position:absolute;left:5px;top:1127px;width:2px;height:19px;background:#8fcf76;"></div>
<div class="t" style="left:47px;top:1127px;"><span class="lnr">58</span></div>
<div class="t" style="left:74px;top:1127px;"><span class="p1">}</span></div>
<svg style="position:absolute;left:83px;top:1127px" width="9" height="19"><path d="M7.6 3.7V11.2H2.5" fill="none" stroke="#6b5f55" stroke-width="1.3"/><path d="M0.3 11.2L4.6 8.6V13.8Z" fill="#6b5f55"/></svg>
<div class="t" style="left:47px;top:1146px;"><span class="lnr">59</span></div>
<svg style="position:absolute;left:74px;top:1146px" width="9" height="19"><path d="M7.6 3.7V11.2H2.5" fill="none" stroke="#6b5f55" stroke-width="1.3"/><path d="M0.3 11.2L4.6 8.6V13.8Z" fill="#6b5f55"/></svg>
<svg style="position:absolute;left:2px;top:1165px" width="9" height="19"><rect x="1" y="8.9" width="7" height="1.6" fill="#8fcf76"/></svg>
<div class="t" style="left:47px;top:1165px;"><span class="lnr">60</span></div>
<div class="t" style="left:74px;top:1165px;"><span class="k">impl</span> <span class="n">std</span><span class="d">  </span><span class="n">ops</span><span class="d">  </span>Neg <span class="k">for</span> Point <span class="p1">{</span></div>
<svg style="position:absolute;left:344px;top:1165px" width="9" height="19"><path d="M7.6 3.7V11.2H2.5" fill="none" stroke="#6b5f55" stroke-width="1.3"/><path d="M0.3 11.2L4.6 8.6V13.8Z" fill="#6b5f55"/></svg>
<div style="position:absolute;left:5px;top:1184px;width:2px;height:19px;background:#8fcf76;"></div>
<div class="t" style="left:47px;top:1184px;"><span class="lnr">61</span></div>
<div style="position:absolute;left:74px;top:1184px;width:2px;height:19px;background:#5b524b;"></div>
<div class="t" style="left:74px;top:1184px;">    <span class="k">type</span> <span class="r">Output</span> <span class="k">=</span> Point;</div>
<svg style="position:absolute;left:290px;top:1184px" width="9" height="19"><path d="M7.6 3.7V11.2H2.5" fill="none" stroke="#6b5f55" stroke-width="1.3"/><path d="M0.3 11.2L4.6 8.6V13.8Z" fill="#6b5f55"/></svg>
<div style="position:absolute;left:5px;top:1203px;width:2px;height:19px;background:#8fcf76;"></div>
<div class="t" style="left:47px;top:1203px;"><span class="lnr">62</span></div>
<div style="position:absolute;left:74px;top:1203px;width:2px;height:19px;background:#5b524b;"></div>
<div style="position:absolute;left:5px;top:1222px;width:2px;height:19px;background:#8fcf76;"></div>
<svg style="position:absolute;left:11px;top:1222px" width="9" height="19"><rect x="1" y="8.9" width="7" height="1.6" fill="#8fcf76"/></svg>
<div class="t" style="left:47px;top:1222px;"><span class="lnr">63</span></div>
<div style="position:absolute;left:74px;top:1222px;width:2px;height:19px;background:#5b524b;"></div>
<div class="t" style="left:74px;top:1222px;">    <span class="k">fn</span> <span class="n">neg</span><span class="p2">(</span><span class="o">self</span><span class="p2">)</span> <span class="k">  </span> <span class="y">Self</span><span class="d">  </span>Output <span class="p2">{</span></div>
<svg style="position:absolute;left:380px;top:1222px" width="9" height="19"><path d="M7.6 3.7V11.2H2.5" fill="none" stroke="#6b5f55" stroke-width="1.3"/><path d="M0.3 11.2L4.6 8.6V13.8Z" fill="#6b5f55"/></svg>
<svg style="position:absolute;left:155px;top:25px" width="18" height="19" fill="#ec6a12"><circle cx="6" cy="7.4" r="1.25"/><circle cx="12" cy="7.4" r="1.25"/><circle cx="6" cy="12.6" r="1.25"/><circle cx="12" cy="12.6" r="1.25"/></svg>
<svg style="position:absolute;left:254px;top:25px" width="18" height="19" fill="#ec6a12"><circle cx="6" cy="7.4" r="1.25"/><circle cx="12" cy="7.4" r="1.25"/><circle cx="6" cy="12.6" r="1.25"/><circle cx="12" cy="12.6" r="1.25"/></svg>
<svg style="position:absolute;left:506px;top:253px" width="18" height="19"><path d="M1.5 9.6H15.6M11.3 5.2L15.8 9.6L11.3 14.1" fill="none" stroke="#d3869b" stroke-width="1.5"/></svg>
<svg style="position:absolute;left:479px;top:424px" width="18" height="19"><path d="M1.5 9.6H15.6M11.3 5.2L15.8 9.6L11.3 14.1" fill="none" stroke="#d3869b" stroke-width="1.5"/></svg>
<svg style="position:absolute;left:146px;top:519px" width="18" height="19" fill="#ec6a12"><circle cx="6" cy="7.4" r="1.25"/><circle cx="12" cy="7.4" r="1.25"/><circle cx="6" cy="12.6" r="1.25"/><circle cx="12" cy="12.6" r="1.25"/></svg>
<svg style="position:absolute;left:191px;top:519px" width="18" height="19" fill="#ec6a12"><circle cx="6" cy="7.4" r="1.25"/><circle cx="12" cy="7.4" r="1.25"/><circle cx="6" cy="12.6" r="1.25"/><circle cx="12" cy="12.6" r="1.25"/></svg>
<svg style="position:absolute;left:326px;top:576px" width="18" height="19"><path d="M1.5 9.6H15.6M11.3 5.2L15.8 9.6L11.3 14.1" fill="none" stroke="#d3869b" stroke-width="1.5"/></svg>
<svg style="position:absolute;left:389px;top:576px" width="18" height="19" fill="#ec6a12"><circle cx="6" cy="7.4" r="1.25"/><circle cx="12" cy="7.4" r="1.25"/><circle cx="6" cy="12.6" r="1.25"/><circle cx="12" cy="12.6" r="1.25"/></svg>
<svg style="position:absolute;left:146px;top:728px" width="18" height="19" fill="#ec6a12"><circle cx="6" cy="7.4" r="1.25"/><circle cx="12" cy="7.4" r="1.25"/><circle cx="6" cy="12.6" r="1.25"/><circle cx="12" cy="12.6" r="1.25"/></svg>
<svg style="position:absolute;left:191px;top:728px" width="18" height="19" fill="#ec6a12"><circle cx="6" cy="7.4" r="1.25"/><circle cx="12" cy="7.4" r="1.25"/><circle cx="6" cy="12.6" r="1.25"/><circle cx="12" cy="12.6" r="1.25"/></svg>
<svg style="position:absolute;left:146px;top:766px" width="9" height="19"><path d="M4.40 9.40L4.40 5.70M4.40 9.40L7.92 8.26M4.40 9.40L6.57 12.39M4.40 9.40L2.23 12.39M4.40 9.40L0.88 8.26" stroke="#eab23a" stroke-width="1.5" stroke-linecap="round" fill="none"/></svg>
<svg style="position:absolute;left:218px;top:766px" width="9" height="19"><path d="M4.40 9.40L4.40 5.70M4.40 9.40L7.92 8.26M4.40 9.40L6.57 12.39M4.40 9.40L2.23 12.39M4.40 9.40L0.88 8.26" stroke="#eab23a" stroke-width="1.5" stroke-linecap="round" fill="none"/></svg>
<svg style="position:absolute;left:146px;top:842px" width="18" height="19" fill="#ec6a12"><circle cx="6" cy="7.4" r="1.25"/><circle cx="12" cy="7.4" r="1.25"/><circle cx="6" cy="12.6" r="1.25"/><circle cx="12" cy="12.6" r="1.25"/></svg>
<svg style="position:absolute;left:191px;top:842px" width="18" height="19" fill="#ec6a12"><circle cx="6" cy="7.4" r="1.25"/><circle cx="12" cy="7.4" r="1.25"/><circle cx="6" cy="12.6" r="1.25"/><circle cx="12" cy="12.6" r="1.25"/></svg>
<svg style="position:absolute;left:326px;top:899px" width="18" height="19"><path d="M1.5 9.6H15.6M11.3 5.2L15.8 9.6L11.3 14.1" fill="none" stroke="#d3869b" stroke-width="1.5"/></svg>
<svg style="position:absolute;left:389px;top:899px" width="18" height="19" fill="#ec6a12"><circle cx="6" cy="7.4" r="1.25"/><circle cx="12" cy="7.4" r="1.25"/><circle cx="6" cy="12.6" r="1.25"/><circle cx="12" cy="12.6" r="1.25"/></svg>
<svg style="position:absolute;left:146px;top:1051px" width="18" height="19" fill="#ec6a12"><circle cx="6" cy="7.4" r="1.25"/><circle cx="12" cy="7.4" r="1.25"/><circle cx="6" cy="12.6" r="1.25"/><circle cx="12" cy="12.6" r="1.25"/></svg>
<svg style="position:absolute;left:191px;top:1051px" width="18" height="19" fill="#ec6a12"><circle cx="6" cy="7.4" r="1.25"/><circle cx="12" cy="7.4" r="1.25"/><circle cx="6" cy="12.6" r="1.25"/><circle cx="12" cy="12.6" r="1.25"/></svg>
<svg style="position:absolute;left:146px;top:1089px" width="9" height="19"><path d="M4.40 9.40L4.40 5.70M4.40 9.40L7.92 8.26M4.40 9.40L6.57 12.39M4.40 9.40L2.23 12.39M4.40 9.40L0.88 8.26" stroke="#eab23a" stroke-width="1.5" stroke-linecap="round" fill="none"/></svg>
<svg style="position:absolute;left:218px;top:1089px" width="9" height="19"><path d="M4.40 9.40L4.40 5.70M4.40 9.40L7.92 8.26M4.40 9.40L6.57 12.39M4.40 9.40L2.23 12.39M4.40 9.40L0.88 8.26" stroke="#eab23a" stroke-width="1.5" stroke-linecap="round" fill="none"/></svg>
<svg style="position:absolute;left:146px;top:1165px" width="18" height="19" fill="#ec6a12"><circle cx="6" cy="7.4" r="1.25"/><circle cx="12" cy="7.4" r="1.25"/><circle cx="6" cy="12.6" r="1.25"/><circle cx="12" cy="12.6" r="1.25"/></svg>
<svg style="position:absolute;left:191px;top:1165px" width="18" height="19" fill="#ec6a12"><circle cx="6" cy="7.4" r="1.25"/><circle cx="12" cy="7.4" r="1.25"/><circle cx="6" cy="12.6" r="1.25"/><circle cx="12" cy="12.6" r="1.25"/></svg>
<svg style="position:absolute;left:227px;top:1222px" width="18" height="19"><path d="M1.5 9.6H15.6M11.3 5.2L15.8 9.6L11.3 14.1" fill="none" stroke="#d3869b" stroke-width="1.5"/></svg>
<svg style="position:absolute;left:290px;top:1222px" width="18" height="19" fill="#ec6a12"><circle cx="6" cy="7.4" r="1.25"/><circle cx="12" cy="7.4" r="1.25"/><circle cx="6" cy="12.6" r="1.25"/><circle cx="12" cy="12.6" r="1.25"/></svg>
<div style="position:absolute;left:74px;top:25px;width:9px;height:19px;background:#d8c39c;"></div>
<div class="t" style="left:74px;top:25px;color:#3c3836"><span class="cur">u</span></div>
<div style="position:absolute;left:2px;top:6px;width:135px;height:19px;background:#84a898"></div>
<svg style="position:absolute;left:137px;top:6px" width="9" height="19" viewBox="0 0 9 19"><polygon points="0,0 0.4,0 8.8,9.5 0.4,19 0,19" fill="#84a898"/></svg>
<div class="t" style="left:11px;top:6px;-webkit-text-stroke-width:0"><span style="color:#3c3836">1</span></div>
<svg style="position:absolute;left:29px;top:6px" width="9" height="19" viewBox="0 0 9 19"><circle cx="4.1" cy="8.8" r="3.7" fill="none" stroke="#3c3836" stroke-width="1.0"/><path d="M2.7 6.9H5.5M1.9 7.9L3.0 9.6M6.3 7.9L5.2 9.6M3.4 10.2L4.1 12M4.8 10.2L4.1 12" stroke="#3c3836" stroke-width="0.9" fill="none"/></svg>
<div class="t" style="left:47px;top:6px;-webkit-text-stroke-width:0"><span style="color:#3c3836">points.rs</span></div>
<div style="position:absolute;left:2441px;top:6px;width:117px;height:19px;background:#84a898"></div>
<svg style="position:absolute;left:2432px;top:6px" width="9" height="19" viewBox="0 0 9 19"><polygon points="9,0 8.6,0 0.2,9.5 8.6,19 9,19" fill="#84a898"/></svg>
<div class="t" style="left:2450px;top:6px;-webkit-text-stroke-width:0"><span style="color:#3c3836">1</span></div>
<div class="t" style="left:2468px;top:6px;-webkit-text-stroke-width:0"><span style="color:#3c3836">points.rs</span></div>
<div class="t" style="left:47px;top:1260px;"><span style="color:#8bab9b">%</span><span style="color:#6b5f55">   </span><span style="color:#ee5040">Cycle backwards through results</span></div>
<svg style="position:absolute;left:65px;top:1260px" width="9" height="19" viewBox="0 0 9 19"><path d="M0.4 9.4H7.4M4.6 6.3L7.6 9.4L4.6 12.5" fill="none" stroke="#6b5f55" stroke-width="1.7"/></svg>
<div class="t" style="left:47px;top:1279px;"><span style="color:#8bab9b">g</span><span style="color:#6b5f55">   </span><span style="color:#ee5040">First line</span></div>
<svg style="position:absolute;left:65px;top:1279px" width="9" height="19" viewBox="0 0 9 19"><path d="M0.4 9.4H7.4M4.6 6.3L7.6 9.4L4.6 12.5" fill="none" stroke="#6b5f55" stroke-width="1.7"/></svg>
<div class="t" style="left:47px;top:1298px;"><span style="color:#8bab9b">i</span><span style="color:#6b5f55">   </span><span style="color:#ee5040">Move to the last insertion and INSERT</span></div>
<svg style="position:absolute;left:65px;top:1298px" width="9" height="19" viewBox="0 0 9 19"><path d="M0.4 9.4H7.4M4.6 6.3L7.6 9.4L4.6 12.5" fill="none" stroke="#6b5f55" stroke-width="1.7"/></svg>
<div class="t" style="left:47px;top:1317px;"><span style="color:#8bab9b">b</span><span style="color:#6b5f55">   </span><span style="color:#ee5040">Comment toggle blockwise</span></div>
<svg style="position:absolute;left:65px;top:1317px" width="9" height="19" viewBox="0 0 9 19"><path d="M0.4 9.4H7.4M4.6 6.3L7.6 9.4L4.6 12.5" fill="none" stroke="#6b5f55" stroke-width="1.7"/></svg>
<div class="t" style="left:497px;top:1260px;"><span style="color:#8bab9b">N</span><span style="color:#6b5f55">   </span><span style="color:#ee5040">Search backwards and select</span></div>
<svg style="position:absolute;left:515px;top:1260px" width="9" height="19" viewBox="0 0 9 19"><path d="M0.4 9.4H7.4M4.6 6.3L7.6 9.4L4.6 12.5" fill="none" stroke="#6b5f55" stroke-width="1.7"/></svg>
<div class="t" style="left:497px;top:1279px;"><span style="color:#8bab9b">c</span><span style="color:#6b5f55">   </span><span style="color:#ee5040">Comment toggle linewise</span></div>
<svg style="position:absolute;left:515px;top:1279px" width="9" height="19" viewBox="0 0 9 19"><path d="M0.4 9.4H7.4M4.6 6.3L7.6 9.4L4.6 12.5" fill="none" stroke="#6b5f55" stroke-width="1.7"/></svg>
<div class="t" style="left:497px;top:1298px;"><span style="color:#8bab9b">f</span><span style="color:#6b5f55">   </span><span style="color:#ee5040">next buffer</span></div>
<svg style="position:absolute;left:515px;top:1298px" width="9" height="19" viewBox="0 0 9 19"><path d="M0.4 9.4H7.4M4.6 6.3L7.6 9.4L4.6 12.5" fill="none" stroke="#6b5f55" stroke-width="1.7"/></svg>
<div class="t" style="left:497px;top:1317px;"><span style="color:#8bab9b">e</span><span style="color:#6b5f55">   </span><span style="color:#ee5040">Previous end of word</span></div>
<svg style="position:absolute;left:515px;top:1317px" width="9" height="19" viewBox="0 0 9 19"><path d="M0.4 9.4H7.4M4.6 6.3L7.6 9.4L4.6 12.5" fill="none" stroke="#6b5f55" stroke-width="1.7"/></svg>
<div class="t" style="left:947px;top:1260px;"><span style="color:#8bab9b">F</span><span style="color:#6b5f55">   </span><span style="color:#ee5040">prev buffer</span></div>
<svg style="position:absolute;left:965px;top:1260px" width="9" height="19" viewBox="0 0 9 19"><path d="M0.4 9.4H7.4M4.6 6.3L7.6 9.4L4.6 12.5" fill="none" stroke="#6b5f55" stroke-width="1.7"/></svg>
<div class="t" style="left:947px;top:1279px;"><span style="color:#8bab9b">n</span><span style="color:#6b5f55">   </span><span style="color:#ee5040">Search forwards and select</span></div>
<svg style="position:absolute;left:965px;top:1279px" width="9" height="19" viewBox="0 0 9 19"><path d="M0.4 9.4H7.4M4.6 6.3L7.6 9.4L4.6 12.5" fill="none" stroke="#6b5f55" stroke-width="1.7"/></svg>
<div class="t" style="left:947px;top:1298px;"><span style="color:#8bab9b">t</span><span style="color:#6b5f55">   </span><span style="color:#ee5040">Go to next tab page</span></div>
<svg style="position:absolute;left:965px;top:1298px" width="9" height="19" viewBox="0 0 9 19"><path d="M0.4 9.4H7.4M4.6 6.3L7.6 9.4L4.6 12.5" fill="none" stroke="#6b5f55" stroke-width="1.7"/></svg>
<div class="t" style="left:947px;top:1317px;"><span style="color:#8bab9b">T</span><span style="color:#6b5f55">   </span><span style="color:#ee5040">Go to previous tab page</span></div>
<svg style="position:absolute;left:965px;top:1317px" width="9" height="19" viewBox="0 0 9 19"><path d="M0.4 9.4H7.4M4.6 6.3L7.6 9.4L4.6 12.5" fill="none" stroke="#6b5f55" stroke-width="1.7"/></svg>
<div class="t" style="left:1397px;top:1260px;"><span style="color:#8bab9b">v</span><span style="color:#6b5f55">   </span><span style="color:#ee5040">Switch to VISUAL using last selection</span></div>
<svg style="position:absolute;left:1415px;top:1260px" width="9" height="19" viewBox="0 0 9 19"><path d="M0.4 9.4H7.4M4.6 6.3L7.6 9.4L4.6 12.5" fill="none" stroke="#6b5f55" stroke-width="1.7"/></svg>
<div class="t" style="left:1397px;top:1279px;"><span style="color:#8bab9b">s</span><span style="color:#6b5f55">   </span><span style="color:#ee5040">Leap from window</span></div>
<svg style="position:absolute;left:1415px;top:1279px" width="9" height="19" viewBox="0 0 9 19"><path d="M0.4 9.4H7.4M4.6 6.3L7.6 9.4L4.6 12.5" fill="none" stroke="#6b5f55" stroke-width="1.7"/></svg>
<div class="t" style="left:1397px;top:1298px;"><span style="color:#8bab9b">x</span><span style="color:#6b5f55">   </span><span style="color:#ee5040">Opens filepath or URI under cursor with t …</span></div>
<svg style="position:absolute;left:1415px;top:1298px" width="9" height="19" viewBox="0 0 9 19"><path d="M0.4 9.4H7.4M4.6 6.3L7.6 9.4L4.6 12.5" fill="none" stroke="#6b5f55" stroke-width="1.7"/></svg>
<div class="t" style="left:1397px;top:1317px;"><span style="color:#8bab9b">~</span><span style="color:#6b5f55">   </span><span style="color:#d3869b">+Toggle case</span></div>
<svg style="position:absolute;left:1415px;top:1317px" width="9" height="19" viewBox="0 0 9 19"><path d="M0.4 9.4H7.4M4.6 6.3L7.6 9.4L4.6 12.5" fill="none" stroke="#6b5f55" stroke-width="1.7"/></svg>
<div class="t" style="left:1847px;top:1260px;"><span style="color:#8bab9b">u</span><span style="color:#6b5f55">   </span><span style="color:#d3869b">+Lowercase</span></div>
<svg style="position:absolute;left:1865px;top:1260px" width="9" height="19" viewBox="0 0 9 19"><path d="M0.4 9.4H7.4M4.6 6.3L7.6 9.4L4.6 12.5" fill="none" stroke="#6b5f55" stroke-width="1.7"/></svg>
<div class="t" style="left:1847px;top:1279px;"><span style="color:#8bab9b">U</span><span style="color:#6b5f55">   </span><span style="color:#d3869b">+Uppercase</span></div>
<svg style="position:absolute;left:1865px;top:1279px" width="9" height="19" viewBox="0 0 9 19"><path d="M0.4 9.4H7.4M4.6 6.3L7.6 9.4L4.6 12.5" fill="none" stroke="#6b5f55" stroke-width="1.7"/></svg>
<div style="position:absolute;left:2px;top:1355px;width:2556px;height:19px;background:#3a3634"></div>
<div style="position:absolute;left:2px;top:1355px;width:72px;height:19px;background:#84a898"></div>
<div style="position:absolute;left:74px;top:1355px;width:81px;height:19px;background:#4f4844"></div>
<svg style="position:absolute;left:74px;top:1355px" width="9" height="19" viewBox="0 0 9 19"><polygon points="0,0 0.4,0 8.8,9.5 0.4,19 0,19" fill="#84a898"/></svg>
<svg style="position:absolute;left:155px;top:1355px" width="9" height="19" viewBox="0 0 9 19"><polygon points="0,0 0.4,0 8.8,9.5 0.4,19 0,19" fill="#4f4844"/></svg>
<div class="t" style="left:11px;top:1355px;-webkit-text-stroke-width:0"><span style="color:#3c3836">NORMAL</span></div>
<svg style="position:absolute;left:92px;top:1355px" width="9" height="19" viewBox="0 0 9 19"><path d="M1.7 0V10" stroke="#d8c8a0" stroke-width="1.9" fill="none"/><path d="M1.7 19V14.6Q1.7 13 3.6 12.2L5.2 11.4Q6.6 10.7 6.6 9V5" stroke="#d8c8a0" stroke-width="1.9" fill="none"/><path d="M3.8 6.8L6.6 3.9L9.2 6.8" stroke="#d8c8a0" stroke-width="1.7" fill="none"/></svg>
<div class="t" style="left:110px;top:1355px;"><span style="color:#d4be98">main</span></div>
<div class="t" style="left:173px;top:1355px;"><span style="color:#d4be98">points.rs</span></div>
<div class="t" style="left:2252px;top:1355px;"><span style="color:#d4be98">utf-8</span></div>
<svg style="position:absolute;left:2306px;top:1355px" width="9" height="19" viewBox="0 0 9 19"><polyline points="8.7,0 0.6,9.5 8.7,19" fill="none" stroke="#d4be98" stroke-width="1.4"/></svg>
<svg style="position:absolute;left:2324px;top:1355px" width="9" height="19" viewBox="0 0 9 19"><circle cx="4.6" cy="5.8" r="1.9" fill="#cbbd9d"/><path d="M3 6.5L6.2 6.5L7.6 11.5Q9 13 8.4 14H0.8Q0.2 13 1.6 11.5Z" fill="#cbbd9d"/></svg>
<svg style="position:absolute;left:2342px;top:1355px" width="9" height="19" viewBox="0 0 9 19"><polyline points="8.7,0 0.6,9.5 8.7,19" fill="none" stroke="#d4be98" stroke-width="1.4"/></svg>
<svg style="position:absolute;left:2360px;top:1355px" width="9" height="19" viewBox="0 0 9 19"><circle cx="3.9" cy="8.7" r="4.3" fill="#e5a07c"/><path d="M2.5 6.4H5.3M1.4 7.8L2.6 9.6M6.4 7.8L5.2 9.6M3.9 10.4V11.8" stroke="#5a3a2a" stroke-width="0.9" fill="none" opacity="0.55"/></svg>
<div class="t" style="left:2378px;top:1355px;"><span style="color:#d4be98">rust</span></div>
<div style="position:absolute;left:2432px;top:1355px;width:54px;height:19px;background:#4f4844"></div>
<svg style="position:absolute;left:2423px;top:1355px" width="9" height="19" viewBox="0 0 9 19"><polygon points="9,0 8.6,0 0.2,9.5 8.6,19 9,19" fill="#4f4844"/></svg>
<div class="t" style="left:2441px;top:1355px;"><span style="color:#d4be98">Top</span></div>
<div style="position:absolute;left:2486px;top:1355px;width:72px;height:19px;background:#84a898"></div>
<svg style="position:absolute;left:2477px;top:1355px" width="9" height="19" viewBox="0 0 9 19"><polygon points="9,0 8.6,0 0.2,9.5 8.6,19 9,19" fill="#84a898"/></svg>
<div class="t" style="left:2513px;top:1355px;-webkit-text-stroke-width:0"><span style="color:#3c3836">1:1</span></div>
<div class="t" style="left:11px;top:1374px;"><span style="color:#d3869b">g</span></div>
<div class="t" style="left:1127px;top:1374px;"><span style="color:#8bab9b">&lt;bs&gt;</span><span style="color:#7c6f64"> go up one level </span><span style="color:#8bab9b">&lt;esc&gt;</span><span style="color:#7c6f64"> close</span></div>
</div></body></html>
